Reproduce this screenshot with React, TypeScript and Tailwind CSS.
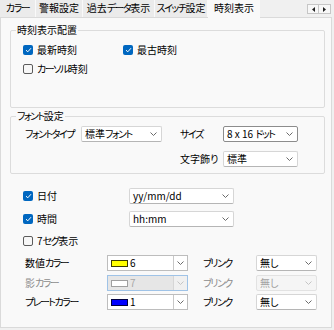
const jp = "font-['Noto_Sans_CJK_JP',sans-serif] [font-feature-settings:'palt']";

// katakana runs are set tighter, like the proportional UI font in the reference
function T({ children }: { children: string }) {
  const parts = children.split(/([\u30A0-\u30FF]+)/);
  return (
    <>
      {parts.map((p, i) =>
        /[\u30A0-\u30FF]/.test(p) ? (
          <span key={i} className="tracking-[-1.5px]">
            {p}
          </span>
        ) : (
          p
        ),
      )}
    </>
  );
}

function Chevron({ className = "text-[#6b6b6b]" }: { className?: string }) {
  return (
    <svg width="7" height="4" viewBox="0 0 7 4" className={className}>
      <path d="M0.5 0.5 L3.5 3.5 L6.5 0.5" fill="none" stroke="currentColor" strokeWidth="1" />
    </svg>
  );
}

function Check({ checked }: { checked?: boolean }) {
  if (checked) {
    return (
      <span className="flex h-[10px] w-[10px] shrink-0 items-center justify-center rounded-[2px] bg-[#0067c0]">
        <svg width="7" height="6" viewBox="0 0 7 6">
          <path d="M1 3.2 L2.8 4.8 L6 1.2" stroke="white" fill="none" strokeWidth="1" />
        </svg>
      </span>
    );
  }
  return <span className="h-[10px] w-[10px] shrink-0 rounded-[2px] border border-[#5c5c5c] bg-[#f7f7f7]" />;
}

function Select({
  value,
  w,
  disabled,
  focused,
}: {
  value: string;
  w: string;
  disabled?: boolean;
  focused?: boolean;
}) {
  const look = disabled
    ? "border-[#e2e2e2] bg-[#f5f5f5] text-[#a3a3a3]"
    : focused
      ? "border-[#8c8c8c] bg-white text-black"
      : "border-[#d6d6d6] border-b-[#b5b5b5] bg-white text-black";
  return (
    <div className={`flex h-[16px] ${w} items-center justify-between rounded-[2px] border ${look} pl-[3px] pr-[4px]`}>
      <span className="whitespace-nowrap">
        <T>{value}</T>
      </span>
      <Chevron className={disabled ? "text-[#c4c4c4]" : "text-[#6b6b6b]"} />
    </div>
  );
}

function ColorCombo({ swatch, value, disabled }: { swatch: string; value: string; disabled?: boolean }) {
  return (
    <div
      className={`flex h-[16px] w-[81px] border ${
        disabled ? "border-[#9fc3e7] bg-[#e6e6e6] text-[#a8a8a8]" : "border-[#bdbdbd] bg-white text-black"
      }`}
    >
      <div className="flex flex-1 items-center gap-[2px] pl-[3px]">
        <span className={`h-[7px] w-[17px] border ${swatch}`} />
        <span>{value}</span>
      </div>
      <div
        className={`flex w-[14px] items-center justify-center border-l ${
          disabled ? "border-[#d6d6d6] bg-[#f0f0f0]" : "border-[#c8c8c8] bg-white"
        }`}
      >
        <Chevron className={disabled ? "text-[#c4c4c4]" : "text-[#6b6b6b]"} />
      </div>
    </div>
  );
}

function Group({ title, h, className = "", children }: { title: string; h: string; className?: string; children: React.ReactNode }) {
  return (
    <div className={`relative ${h} w-[315px] rounded-[2px] border border-[#dcdcdc] ${className}`}>
      <span className="absolute -top-[8px] left-[5px] whitespace-nowrap bg-[#f9f9f9] px-[1px] leading-[14px]">
        <T>{title}</T>
      </span>
      {children}
    </div>
  );
}

function Label({ text, w, className = "" }: { text: string; w: string; className?: string }) {
  return (
    <span className={`${w} shrink-0 whitespace-nowrap ${className}`}>
      <T>{text}</T>
    </span>
  );
}

const tabs = [
  { label: "カラー", w: "w-[36px]" },
  { label: "警報設定", w: "w-[47px]" },
  { label: "過去データ表示", w: "w-[72px]" },
  { label: "スイッチ設定", w: "w-[53px]" },
];

export default function App() {
  return (
    <div className={`h-[330px] w-[334px] bg-[#f0f0f0] text-[10px] leading-[14px] text-black ${jp}`}>
      {/* tab strip */}
      <div className="flex h-[17px] items-start">
        {tabs.map((t) => (
          <div
            key={t.label}
            className={`flex h-[17px] ${t.w} shrink-0 items-center justify-center whitespace-nowrap border-r border-[#f9f9f9] bg-[#ebebeb] pb-[1px]`}
          >
            <T>{t.label}</T>
          </div>
        ))}
        <div className="relative z-10 flex h-[18px] w-[52px] shrink-0 items-center justify-center whitespace-nowrap bg-[#f9f9f9] pb-[2px]">
          時刻表示
        </div>
        <div className="ml-auto mr-[3px] mt-[4px] flex">
          <div className="flex h-[10px] w-[12px] items-center justify-center border border-[#c6c6c6] bg-[#f7f7f7]">
            <svg width="3" height="5" viewBox="0 0 3 5">
              <path d="M3 0 L0 2.5 L3 5 Z" fill="#222" />
            </svg>
          </div>
          <div className="flex h-[10px] w-[12px] items-center justify-center border border-l-0 border-[#c6c6c6] bg-[#f7f7f7]">
            <svg width="3" height="5" viewBox="0 0 3 5">
              <path d="M0 0 L3 2.5 L0 5 Z" fill="#222" />
            </svg>
          </div>
        </div>
      </div>

      {/* page */}
      <div className="h-[311px] w-[332px] border border-[#dadada] bg-[#f9f9f9] pl-[9px] pt-[12px]">
        <Group title="時刻表示配置" h="h-[78px]">
          <div className="pl-[12px] pt-[9px]">
            <div className="flex h-[19px] items-center">
              <div className="flex w-[100px] items-center gap-[4px]">
                <Check checked />
                <span>最新時刻</span>
              </div>
              <div className="flex items-center gap-[4px]">
                <Check checked />
                <span>最古時刻</span>
              </div>
            </div>
            <div className="flex h-[19px] items-center gap-[4px]">
              <Check />
              <Label text="カーソル時刻" w="w-auto" />
            </div>
          </div>
        </Group>

        <Group title="フォント設定" h="h-[58px]" className="mt-[8px]">
          <div className="pl-[14px] pt-[9px]">
            <div className="flex h-[16px] items-center">
              <Label text="フォントタイプ" w="w-[56px]" />
              <Select value="標準フォント" w="w-[81px]" />
              <Label text="サイズ" w="w-[43px]" className="ml-[18px]" />
              <Select value="8 x 16 ドット" w="w-[75px]" focused />
            </div>
            <div className="mt-[9px] flex h-[16px] items-center">
              <Label text="文字飾り" w="w-[43px]" className="ml-[155px]" />
              <Select value="標準" w="w-[75px]" />
            </div>
          </div>
        </Group>

        <div className="mt-[14px] pl-[13px]">
          <div className="flex h-[16px] items-center">
            <div className="flex w-[106px] items-center gap-[4px]">
              <Check checked />
              <span>日付</span>
            </div>
            <Select value="yy/mm/dd" w="w-[105px]" />
          </div>
          <div className="mt-[7px] flex h-[16px] items-center">
            <div className="flex w-[106px] items-center gap-[4px]">
              <Check checked />
              <span>時間</span>
            </div>
            <Select value="hh:mm" w="w-[105px]" />
          </div>
          <div className="mt-[6px] flex h-[16px] items-center gap-[4px]">
            <Check />
            <Label text="7セグ表示" w="w-auto" />
          </div>

          <div className="mt-[6px] flex h-[16px] items-center pl-[2px]">
            <Label text="数値カラー" w="w-[82px]" />
            <ColorCombo swatch="border-[#3a3a00] bg-[#ffff00]" value="6" />
            <Label text="ブリンク" w="w-[53px]" className="ml-[15px]" />
            <Select value="無し" w="w-[61px]" />
          </div>
          <div className="mt-[4px] flex h-[16px] items-center pl-[2px] text-[#8c8c8c]">
            <Label text="影カラー" w="w-[82px]" />
            <ColorCombo swatch="border-[#a0a0a0] bg-white" value="7" disabled />
            <Label text="ブリンク" w="w-[53px]" className="ml-[15px]" />
            <Select value="無し" w="w-[61px]" disabled />
          </div>
          <div className="mt-[3px] flex h-[16px] items-center pl-[2px]">
            <Label text="プレートカラー" w="w-[82px]" />
            <ColorCombo swatch="border-[#000040] bg-[#0000ff]" value="1" />
            <Label text="ブリンク" w="w-[53px]" className="ml-[15px]" />
            <Select value="無し" w="w-[61px]" disabled={false} />
          </div>
        </div>
      </div>
    </div>
  );
}
